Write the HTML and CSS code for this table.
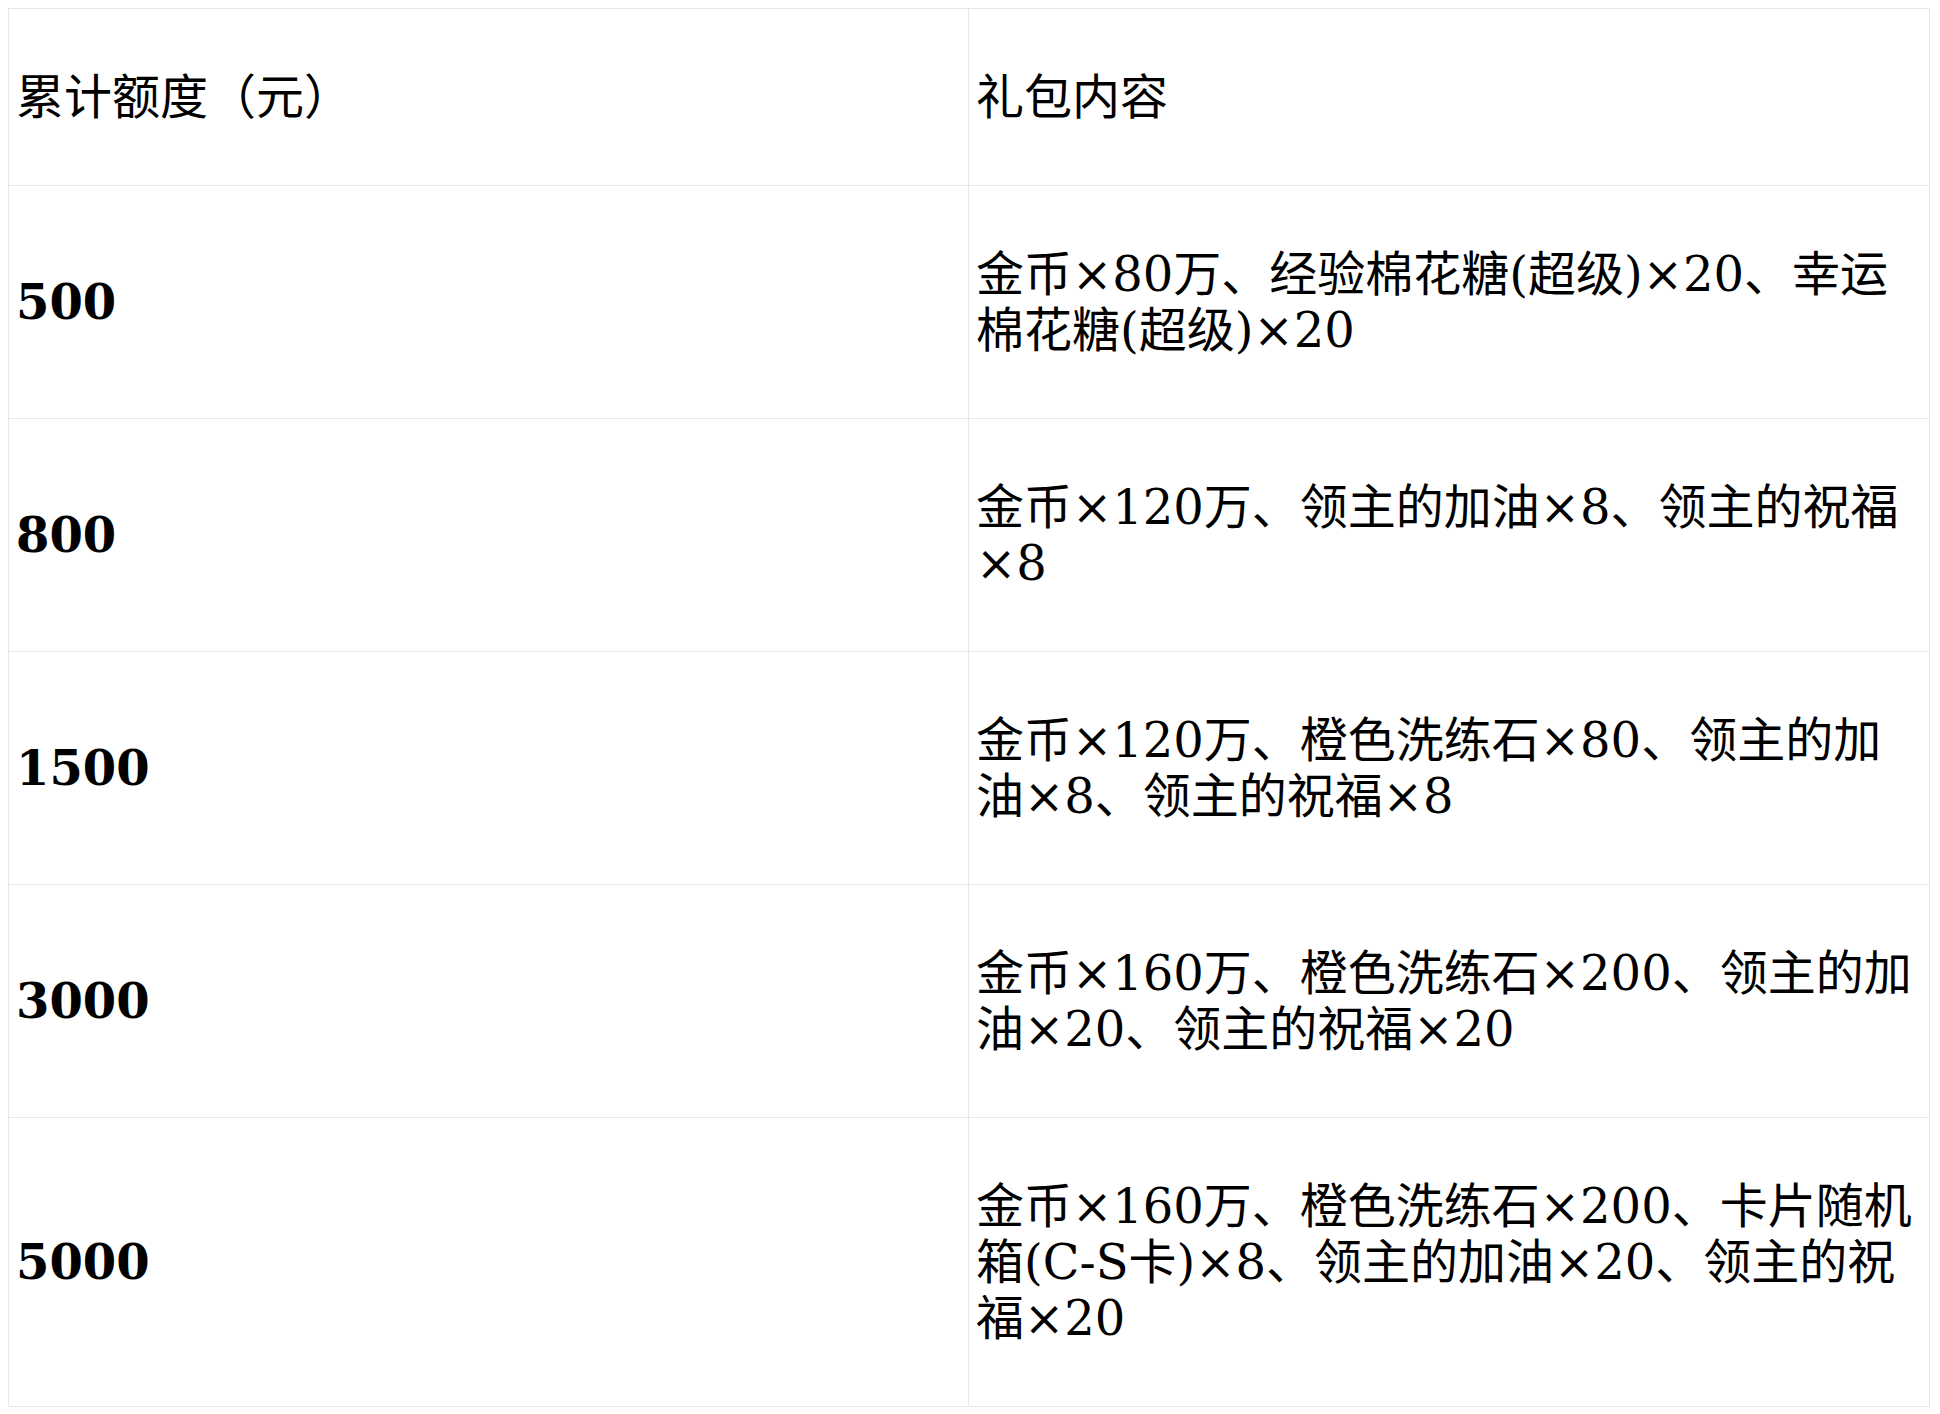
FILE: index.html
```html
<!DOCTYPE html>
<html lang="zh-CN">
<head>
<meta charset="utf-8">
<title>累计额度礼包</title>
<link rel="stylesheet" href="styles.css">
</head>
<body>
<table class="gift-table">
  <colgroup><col class="col-a"><col class="col-b"></colgroup>
  <thead>
    <tr><th>累计额度（元）</th><th>礼包内容</th></tr>
  </thead>
  <tbody>
    <tr><td class="amount">500</td><td>金币×80万、经验棉花糖(超级)×20、幸运棉花糖(超级)×20</td></tr>
    <tr><td class="amount">800</td><td>金币×120万、领主的加油×8、领主的祝福×8</td></tr>
    <tr><td class="amount">1500</td><td>金币×120万、橙色洗练石×80、领主的加油×8、领主的祝福×8</td></tr>
    <tr><td class="amount">3000</td><td>金币×160万、橙色洗练石×200、领主的加油×20、领主的祝福×20</td></tr>
    <tr><td class="amount">5000</td><td>金币×160万、橙色洗练石×200、卡片随机箱(C-S卡)×8、领主的加油×20、领主的祝福×20</td></tr>
  </tbody>
</table>
</body>
</html>
```
FILE: styles.css
```css
html, body {
  background: #ffffff;
}
body {
  margin: 8px;
  font-family: "DejaVu Serif", "Noto Sans CJK SC", serif;
  font-size: 48px;
  color: #000000;
}
.gift-table {
  width: 1921px;
  border-collapse: collapse;
  table-layout: fixed;
}
.col-a { width: 960px; }
.col-b { width: 961px; }
.gift-table th,
.gift-table td {
  border: 1px solid #e5e5ee;
  padding: 60px 7px;
  text-align: left;
  vertical-align: middle;
  font-weight: normal;
  line-height: 56px;
}
.gift-table td.amount {
  font-weight: bold;
}
```
